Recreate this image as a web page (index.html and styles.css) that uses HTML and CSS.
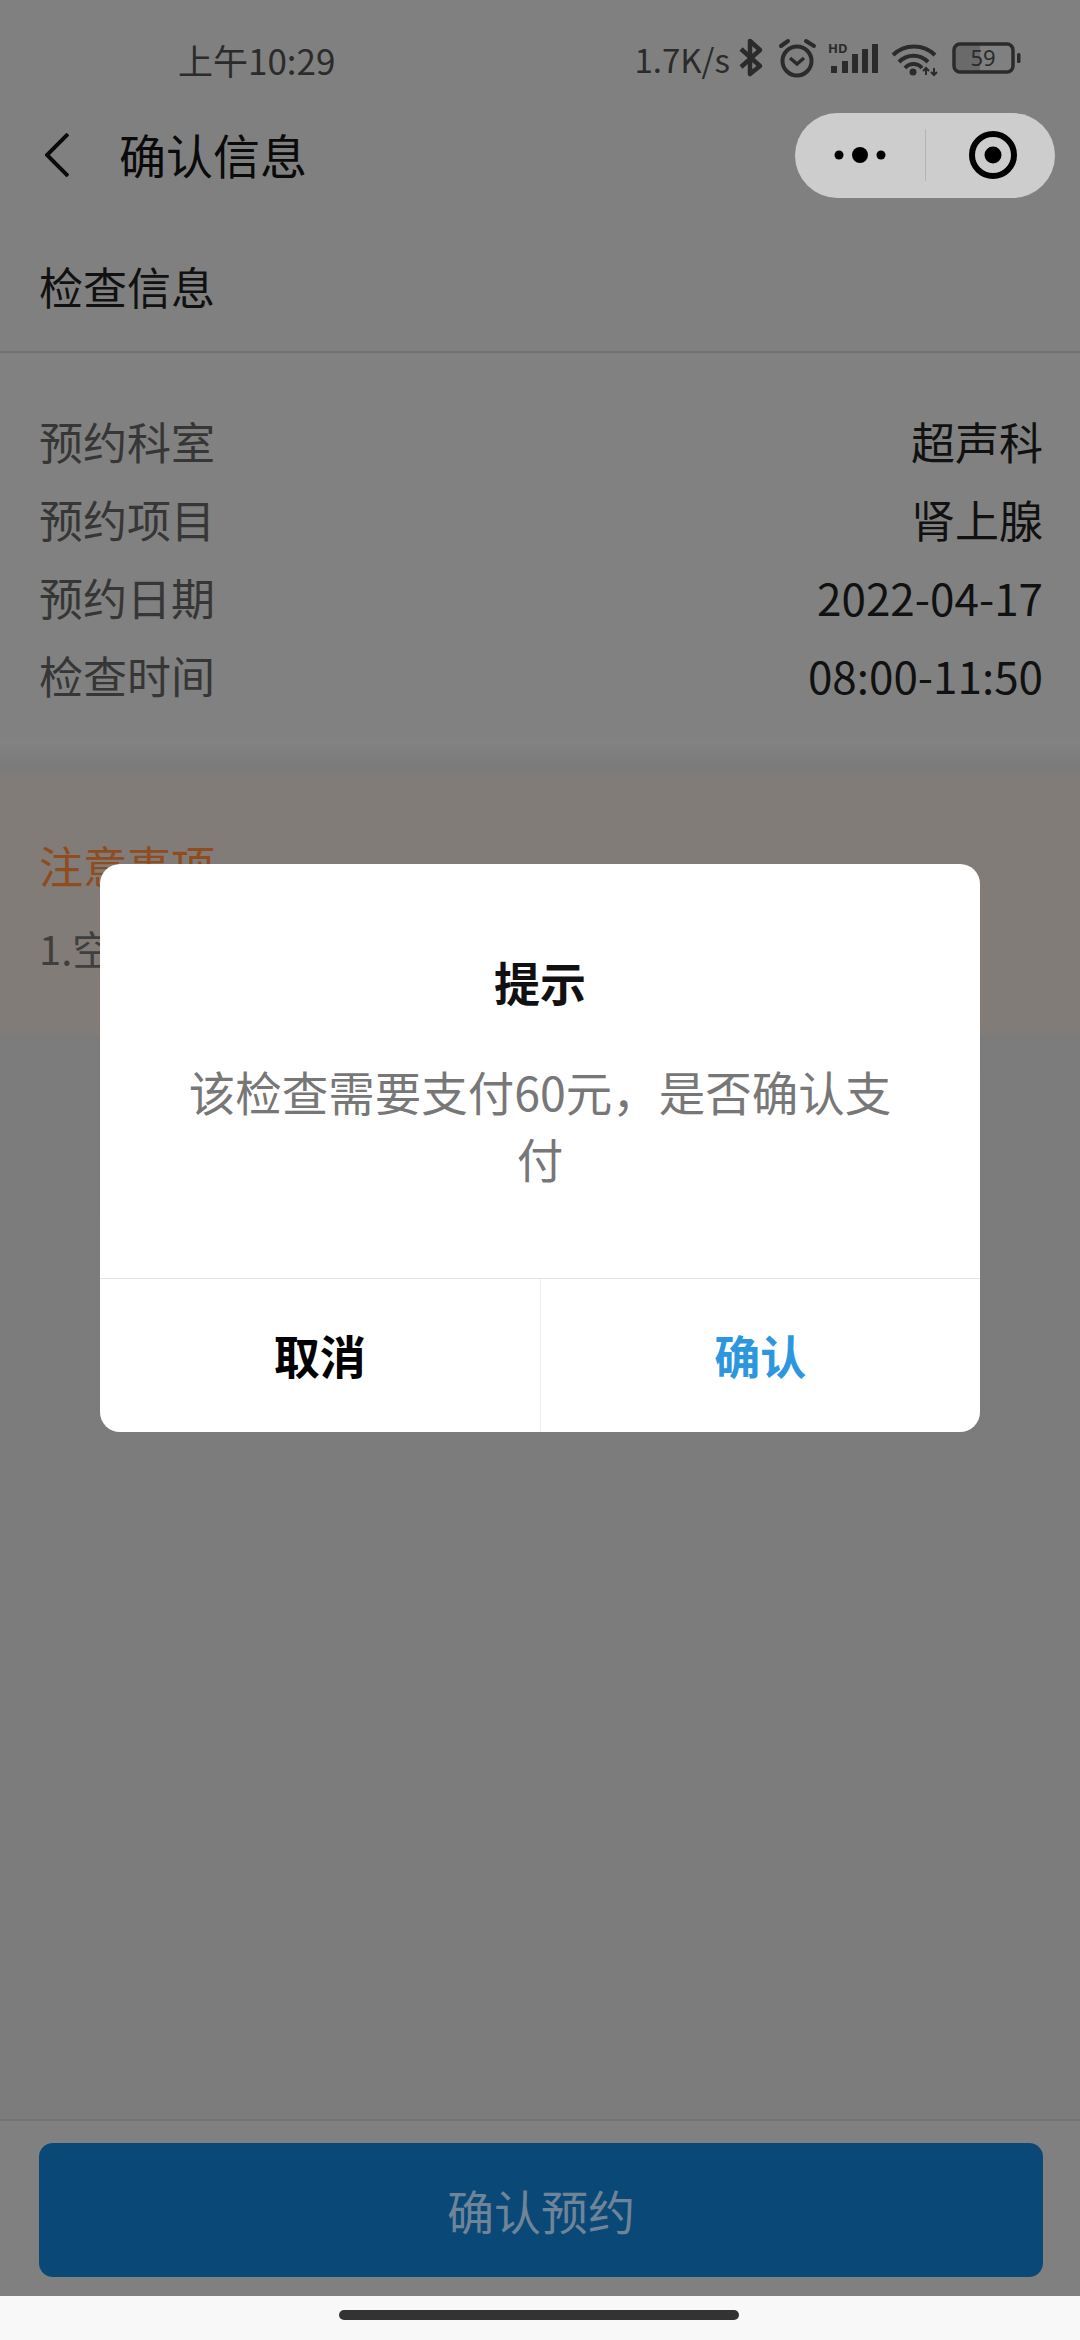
FILE: index.html
```html
<!DOCTYPE html>
<html lang="zh-CN">
<head>
    <meta charset="UTF-8">
    <title>确认信息</title>
    <meta name="viewport" content="width=device-width, initial-scale=1.0">
    <link rel="stylesheet" href="styles.css">
</head>
<body>
    <div class="screen">
        <div class="status-bar">
            <span class="status-time">上午10:29</span>
            <div class="status-right">
                <span class="status-speed">1.7K/s</span>
                <svg class="status-icons" width="283" height="44" viewBox="738 38 283 44">
                    <!-- bluetooth -->
                    <path d="M741 50 L760 67 L750 75 L750 42 L760 51 L741 68" fill="none" stroke="#2b2b2b" stroke-width="4.5" stroke-linejoin="round"/>
                    <!-- alarm -->
                    <circle cx="797" cy="62" r="14.5" fill="none" stroke="#2b2b2b" stroke-width="4"/>
                    <path d="M781 47 L788 42 M806 42 L814 47" stroke="#2b2b2b" stroke-width="4" stroke-linecap="round"/>
                    <path d="M790 59 L797 65 L804 59" fill="none" stroke="#2b2b2b" stroke-width="3.5"/>
                    <!-- signal -->
                    <text x="828" y="54" font-size="13" font-weight="700" fill="#2b2b2b">HD</text>
                    <rect x="831" y="67" width="6" height="7" fill="#2b2b2b"/>
                    <rect x="842" y="62" width="6" height="12" fill="#2b2b2b"/>
                    <rect x="852" y="55" width="6" height="19" fill="#2b2b2b"/>
                    <rect x="862" y="50" width="6" height="24" fill="#2b2b2b"/>
                    <rect x="872" y="45" width="6" height="29" fill="#2b2b2b"/>
                    <!-- wifi -->
                    <path d="M893 56 A30 30 0 0 1 935 56 M899 63 A20 20 0 0 1 928 63 M905 69 A11 11 0 0 1 922 69" fill="none" stroke="#2b2b2b" stroke-width="4"/>
                    <circle cx="913" cy="73" r="3.5" fill="#2b2b2b"/>
                    <path d="M926 69 V76 M934 69 V76 M923 72 L926 69 L929 72 M931 73 L934 76 L937 73" fill="none" stroke="#2b2b2b" stroke-width="2"/>
                    <!-- battery -->
                    <rect x="955" y="46" width="25" height="26" fill="#6a6a6a"/>
                    <rect x="954" y="45" width="59" height="28" rx="6" fill="none" stroke="#2b2b2b" stroke-width="3.5"/>
                    <text x="983" y="67" font-size="22" text-anchor="middle" fill="#2b2b2b">59</text>
                    <rect x="1017" y="54" width="3.5" height="10" rx="1.5" fill="#2b2b2b"/>
                </svg>
            </div>
        </div>

        <div class="nav-bar">
            <svg class="nav-back" width="24" height="44" viewBox="0 0 24 44">
                <path d="M23 1 L2 22 L23 43" fill="none" stroke="#0a0a0a" stroke-width="4"/>
            </svg>
            <span class="nav-title">确认信息</span>
            <div class="capsule">
                <svg class="capsule-dots" width="52" height="16" viewBox="0 0 52 16">
                    <circle cx="5" cy="8" r="4.5" fill="#000"/>
                    <circle cx="26" cy="8" r="8" fill="#000"/>
                    <circle cx="47" cy="8" r="4.5" fill="#000"/>
                </svg>
                <div class="capsule-line"></div>
                <svg class="capsule-target" width="48" height="48" viewBox="0 0 48 48">
                    <circle cx="24" cy="24" r="21" fill="none" stroke="#000" stroke-width="6"/>
                    <circle cx="24" cy="24" r="8.5" fill="#000"/>
                </svg>
            </div>
        </div>

        <div class="section-head">检查信息</div>

        <div class="info-list">
            <div class="info-row"><span class="info-label">预约科室</span><span class="info-value">超声科</span></div>
            <div class="info-row"><span class="info-label">预约项目</span><span class="info-value">肾上腺</span></div>
            <div class="info-row"><span class="info-label">预约日期</span><span class="info-value">2022-04-17</span></div>
            <div class="info-row"><span class="info-label">检查时间</span><span class="info-value">08:00-11:50</span></div>
        </div>

        <div class="content-rest">
            <div class="notice">
                <div class="notice-title">注意事项</div>
                <div class="notice-text">1.空腹</div>
            </div>
        </div>

        <div class="footer">
            <div class="confirm-btn">确认预约</div>
        </div>

        <div class="gesture-bar"><div class="gesture-pill"></div></div>

        <div class="modal-wrap">
            <div class="modal">
                <div class="modal-body">
                    <div class="modal-title">提示</div>
                    <div class="modal-text">该检查需要支付60元，是否确认支付</div>
                </div>
                <div class="modal-actions">
                    <div class="modal-btn">取消</div>
                    <div class="modal-btn primary">确认</div>
                </div>
            </div>
        </div>
    </div>
</body>
</html>
```

FILE: styles.css
```css
* {
    box-sizing: border-box;
}
body {
    margin: 0;
    font-family: "Noto Sans CJK SC", "Noto Sans", sans-serif;
    background-color: #808080;
}
.screen {
    position: relative;
    display: flex;
    flex-direction: column;
    width: 1080px;
    height: 2340px;
    overflow: hidden;
    background-color: #808080;
}

/* status bar */
.status-bar {
    display: flex;
    align-items: center;
    justify-content: space-between;
    height: 118px;
    padding: 0 59px 0 178px;
    color: #2b2b2b;
    font-size: 35px;
}
.status-right {
    display: flex;
    align-items: center;
    gap: 8px;
}
.status-speed {
    font-size: 33px;
}
.status-icons text {
    font-family: "Noto Sans", sans-serif;
}

/* nav */
.nav-bar {
    display: flex;
    align-items: center;
    height: 74px;
    padding: 0 25px 0 45px;
}
.nav-back {
    flex: none;
}
.nav-title {
    flex: 1;
    margin-left: 50px;
    padding-bottom: 4px;
    font-size: 47px;
    color: #0a0a0a;
}
.capsule {
    display: flex;
    align-items: center;
    width: 260px;
    height: 85px;
    padding-left: 39px;
    border-radius: 43px;
    background-color: #cdcdcd;
}
.capsule-line {
    width: 1px;
    height: 52px;
    margin-left: 39px;
    background-color: #b4b4b4;
}
.capsule-target {
    margin-left: 43px;
}

/* info */
.section-head {
    display: flex;
    align-items: center;
    height: 161px;
    padding: 28px 37px 0 39px;
    border-bottom: 2px solid #707070;
    font-size: 44px;
    color: #111;
}
.info-list {
    height: 387px;
    padding: 49px 37px 0 39px;
    background-color: #818181;
}
.info-row {
    display: flex;
    justify-content: space-between;
    align-items: center;
    height: 78px;
    font-size: 44px;
}
.info-label {
    color: #363636;
}
.info-value {
    color: #111;
}

/* notice */
.content-rest {
    flex: 1;
    padding-top: 35px;
    background: linear-gradient(#838383 0, #7b7b7b 24px, #7c7c7c 100%);
}
.notice {
    height: 260px;
    padding: 60px 39px 0;
    background-color: #827c78;
}
.notice-title {
    height: 60px;
    line-height: 60px;
    font-size: 44px;
    color: #8f4c1e;
}
.notice-text {
    height: 60px;
    margin-top: 23px;
    line-height: 60px;
    font-size: 40px;
    color: #3f3f3f;
}

/* footer */
.footer {
    height: 177px;
    padding: 22px 37px 0 39px;
    border-top: 2px solid #747474;
    background-color: #808080;
}
.confirm-btn {
    height: 134px;
    line-height: 134px;
    text-align: center;
    font-size: 47px;
    color: #6f8497;
    background-color: #0a4878;
    border-radius: 14px;
}
.gesture-bar {
    display: flex;
    justify-content: center;
    height: 44px;
    padding-top: 14px;
    padding-right: 3px;
    background-color: #f8f8f8;
}
.gesture-pill {
    width: 400px;
    height: 10px;
    border-radius: 5px;
    background-color: #333;
}

/* dialog */
.modal-wrap {
    position: absolute;
    top: 0;
    left: 0;
    right: 0;
    height: 2296px;
    display: flex;
    align-items: center;
    justify-content: center;
}
.modal {
    width: 880px;
    height: 568px;
    display: flex;
    flex-direction: column;
    border-radius: 20px;
    background-color: #fff;
}
.modal-body {
    flex: 1;
    padding: 83px 80px 0;
    text-align: center;
}
.modal-title {
    height: 68px;
    line-height: 68px;
    font-size: 46px;
    font-weight: 700;
    color: #111;
}
.modal-text {
    margin-top: 42px;
    line-height: 67px;
    font-size: 46.5px;
    color: #777;
}
.modal-actions {
    display: flex;
    height: 154px;
    padding-bottom: 4px;
    border-top: 1px solid #e4e4e4;
}
.modal-btn {
    flex: 1;
    display: flex;
    align-items: center;
    justify-content: center;
    font-size: 46px;
    font-weight: 700;
    color: #000;
}
.modal-btn.primary {
    border-left: 1px solid #eee;
    margin-bottom: -4px;
    padding-bottom: 4px;
    color: #2c97de;
}
```
